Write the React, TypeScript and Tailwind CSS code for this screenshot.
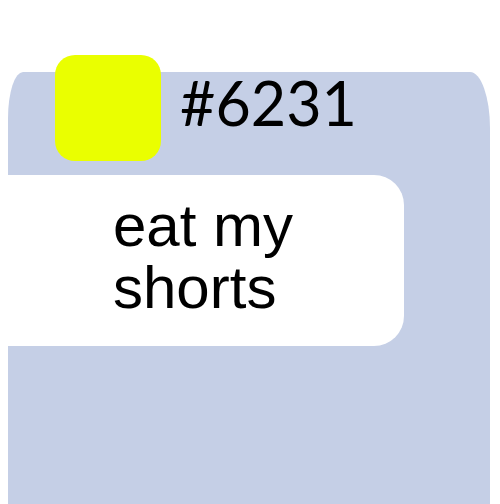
export default function App() {
    return (
        <div className="w-[500px] h-[504px] bg-white overflow-hidden">
            <div className="flex flex-col ml-[8px] mt-[72px] w-[482px] h-[432px] bg-[#c5cfe6] rounded-tl-[15px_46px] rounded-tr-[20px_56px]">
                <div className="flex items-start gap-[19px] pl-[47px] -mt-[17px]">
                    <div className="w-[106px] h-[106px] rounded-[20px] bg-[#eaff00]" />
                    <p className="mt-[17px] text-[61px] leading-none text-black font-['Lato',sans-serif]">#6231</p>
                </div>
                <div className="mt-[14px] w-[396px] h-[171px] bg-white rounded-r-[30px] pl-[105px] pt-[20px]">
                    <p className="text-[60px] leading-[62px] text-black font-['Liberation_Sans',Arial,sans-serif]">eat my shorts</p>
                </div>
            </div>
        </div>
    )
}
